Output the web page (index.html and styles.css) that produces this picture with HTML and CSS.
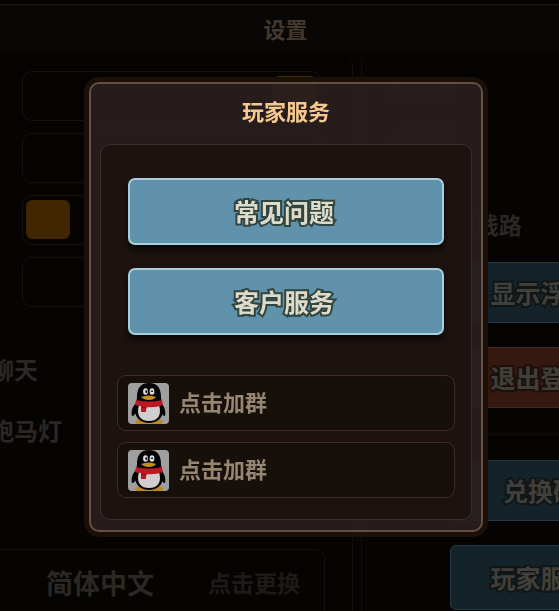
FILE: index.html
```html
<!DOCTYPE html>
<html lang="zh-CN">
<head>
  <meta charset="UTF-8">
  <meta name="viewport" content="width=device-width, initial-scale=1.0">
  <title>玩家服务</title>
  <link rel="stylesheet" href="styles.css">
</head>
<body>
  <div class="settings">
    <header class="settings-header"><h1>设置</h1></header>
    <main class="settings-body">
      <div class="options">
        <input class="toggle on" type="checkbox" aria-label="音乐" checked>
        <input class="toggle" type="checkbox" aria-label="音效">
        <input class="toggle off" type="checkbox" aria-label="震动">
        <input class="toggle" type="checkbox" aria-label="通知">
        <div class="names">
          <p>聊天</p>
          <p>跑马灯</p>
        </div>
        <div class="language">
          <span class="language-name">简体中文</span>
          <span class="language-change">点击更换</span>
        </div>
      </div>
      <div class="account">
        <div class="profile">
          <p>账号ID</p>
          <p class="rename">
            <svg width="24" height="24" viewBox="0 0 24 24"><path d="M0 24l3-9 6 6zM5 13l11-11 6 6-11 11z" fill="currentColor"/></svg>
            改名
          </p>
        </div>
        <p class="line">选择线路</p>
        <div class="actions">
          <button class="side-button">显示浮窗</button>
          <button class="side-button red">退出登录</button>
        </div>
        <div class="actions more">
          <button class="side-button">兑换码</button>
          <button class="side-button large">玩家服务</button>
        </div>
      </div>
    </main>
  </div>

  <svg class="symbols" width="0" height="0" aria-hidden="true">
    <symbol id="penguin" viewBox="0 0 41 41">
      <rect width="41" height="41" fill="#a09f9f"/>
      <ellipse cx="14" cy="39" rx="7" ry="3" fill="#bd8927"/>
      <ellipse cx="28" cy="39" rx="7" ry="3" fill="#bd8927"/>
      <path d="M8 20C4 24 3 29 4 33c2 0 3-2 5-4zM33 20c4 4 5 9 4 13-2 0-3-2-5-4z" fill="#050505"/>
      <path d="M21 0C12 0 9 6 9 14c0 4-2 8-2 13 0 8 6 13 14 13s14-5 14-13c0-5-2-9-2-13C33 6 30 0 21 0z" fill="#050505"/>
      <path d="M11 22h20c3 10-1 16-10 16S8 32 11 22z" fill="#d0cece"/>
      <ellipse cx="17.5" cy="8.5" rx="2.4" ry="3.3" fill="#ddd"/>
      <ellipse cx="24" cy="8.5" rx="2.4" ry="3.3" fill="#ddd"/>
      <ellipse cx="18.3" cy="8.5" rx="1" ry="1.6" fill="#111"/>
      <path d="M23 9q1-3 2 0" fill="none" stroke="#111" stroke-width="1"/>
      <path d="M13 14q8-3 15 0-2 3-7 3t-8-3z" fill="#c78d20"/>
      <path d="M8 17q13 3 26 0l1 5q-8 3-17 2v5h-5v-6q-4 0-6-1z" fill="#bc1820"/>
      <path d="M13 24l6 1" stroke="#821018" stroke-width="1"/>
    </symbol>
  </svg>

  <div class="overlay">
    <section class="modal" role="dialog" aria-labelledby="modal-title">
      <h2 id="modal-title">玩家服务</h2>
      <div class="modal-body">
        <div class="buttons">
          <button class="main-button">常见问题</button>
          <button class="main-button">客户服务</button>
        </div>
        <div class="groups">
          <a class="group" href="#"><svg class="avatar"><use href="#penguin"/></svg><span>点击加群</span></a>
          <a class="group" href="#"><svg class="avatar"><use href="#penguin"/></svg><span>点击加群</span></a>
        </div>
      </div>
    </section>
  </div>
</body>
</html>
```

FILE: styles.css
```css
* {
  box-sizing: border-box;
}
html,body {
  margin: 0;
  padding: 0;
  height: 100%;
  overflow: hidden;
}
body {
  background-color: #050403;
  color: #2c2722;
  font-family: "Noto Sans CJK SC", sans-serif;
  font-weight: 500;
}
h1,h2,p {
  margin: 0;
}
button {
  font-family: inherit;
  padding: 0 0 2px;
}

/* settings page behind the dialog */
.settings-header {
  height: 50px;
  margin-top: 4px;
  padding-left: 12px;
  border-top: 1px solid #1d1811;
  background-color: #080706;
  text-align: center;
}
.settings-header h1 {
  color: #44372b;
  font-size: 22px;
  line-height: 46px;
}
.settings-body {
  display: grid;
  grid-template-columns: minmax(0, 64fr) minmax(0, 36fr);
  gap: 8px;
}
.options {
  display: flex;
  flex-direction: column;
  gap: 12px;
  padding-top: 17px;
  border-right: 1px solid #120e0c;
  border-radius: 0 10px 0 0;
}
.toggle {
  appearance: none;
  display: flex;
  height: 50px;
  margin: 0 31px 0 22px;
  padding: 4px 3px;
  border: 1px solid #14110f;
  border-radius: 10px;
}
.toggle::before {
  content: "";
  width: 44px;
  height: 39px;
  border-radius: 6px;
}
.toggle.on {
  justify-content: flex-end;
}
.toggle.on::before,
.toggle.off::before {
  background-color: #412700;
}
.names {
  display: grid;
  gap: 25px;
  margin: 32px 0 0 -10px;
  font-size: 24px;
  font-weight: 700;
  line-height: 36px;
}
.language {
  display: flex;
  align-items: center;
  gap: 54px;
  height: 70px;
  margin: 89px 27px 0 0;
  padding: 0 0 4px 46px;
  border: 1px solid #13100e;
  border-left: none;
  border-radius: 0 10px 10px 0;
  font-weight: 700;
  white-space: nowrap;
}
.language-name {
  font-size: 27px;
}
.language-change {
  color: #1f1a16;
  font-size: 23px;
}
.account {
  padding-left: 24px;
  border-left: 1px solid #120e0c;
  border-radius: 10px 0 0 0;
  font-weight: 700;
  white-space: nowrap;
}
.profile {
  display: grid;
  gap: 8px;
  padding-top: 18px;
  color: #1c1613;
  font-size: 23px;
  line-height: 36px;
}
.rename {
  display: flex;
  align-items: center;
}
.line {
  margin-top: 54px;
  padding-left: 44px;
  font-size: 23px;
  line-height: 36px;
}
.actions {
  display: grid;
  gap: 24px;
  margin-top: 20px;
  padding-left: 64px;
}
.actions.more {
  margin-top: 24px;
  padding-top: 24px;
  border-top: 4px solid #0b0807;
}
.side-button {
  width: 182px;
  height: 61px;
  border: 1px solid #253a43;
  border-radius: 6px;
  background-color: #14232a;
  color: #413f3a;
  font-size: 25px;
  font-weight: 700;
  -webkit-text-stroke: 4px #101516;
  paint-order: stroke fill;
}
.side-button.red {
  border-color: #48251b;
  background-color: #351810;
  -webkit-text-stroke-color: #1c100c;
}
.side-button.large {
  height: 65px;
}

/* dialog */
.symbols {
  position: absolute;
}
.overlay {
  position: fixed;
  top: 0;
  right: 0;
  bottom: 0;
  left: 0;
  padding: 82px 76px 0 89px;
}
.modal {
  padding: 0 9px 10px;
  border: 2px solid #655044;
  border-radius: 10px;
  background-color: rgba(41, 30, 30, 0.92);
  box-shadow: 0 0 0 5px #1a1007;
}
.modal h2 {
  padding-bottom: 8px;
  color: #f6c990;
  font-size: 22px;
  line-height: 52px;
  text-align: center;
}
.modal-body {
  padding: 33px 16px 21px;
  border: 1px solid #3c2e2b;
  border-radius: 10px;
  background-color: #1c120f;
}
.buttons {
  display: grid;
  gap: 23px;
  padding: 0 11px;
}
.main-button {
  height: 67px;
  padding-right: 4px;
  border: 2px solid #a6cedd;
  border-radius: 7px;
  background-color: #6093ab;
  box-shadow: 0 5px 4px #0d0907;
  color: #dedbca;
  font-size: 25px;
  font-weight: 700;
  -webkit-text-stroke: 4px #304440;
  paint-order: stroke fill;
}
.groups {
  display: grid;
  gap: 11px;
  margin-top: 40px;
}
.group {
  display: flex;
  align-items: center;
  gap: 10px;
  height: 56px;
  padding-left: 10px;
  border: 1px solid #402c22;
  border-radius: 9px;
  background-color: #170f0a;
  color: #958571;
  font-size: 22px;
  font-weight: 700;
  text-decoration: none;
}
.group span {
  padding-bottom: 5px;
}
.avatar {
  width: 41px;
  height: 41px;
  border-radius: 4px;
}
```
